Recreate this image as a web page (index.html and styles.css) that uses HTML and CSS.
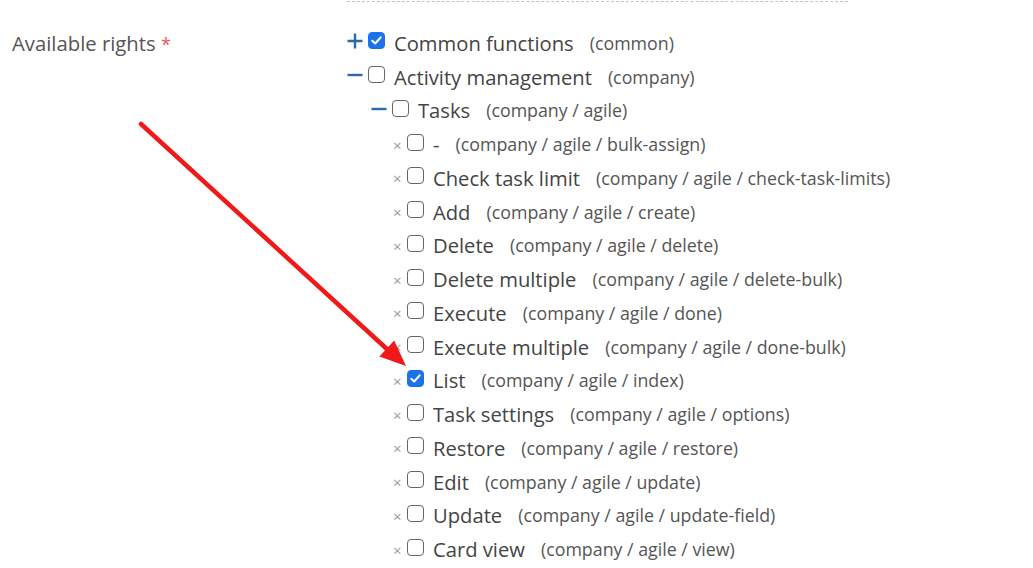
FILE: index.html
```html
<!DOCTYPE html>
<html lang="en">

<head>
    <meta charset="UTF-8">
    <meta name="viewport" content="width=device-width, initial-scale=1.0">
    <title>Available rights</title>
    <link rel="stylesheet" href="styles.css">
</head>

<body>
    <div class="separator"></div>

    <div class="form-row">
        <div class="form-label">Available rights <span class="required">*</span></div>

        <ul class="tree">
            <li class="node">
                <span class="toggle"><svg viewBox="0 0 16 16"><path d="M0.5 8 H15.5 M8 0.5 V15.5" /></svg></span>
                <span class="check checked"><svg viewBox="0 0 16 16"><path d="M3.5 8.3 L6.6 11.2 L12.5 4.6" /></svg></span>
                <span class="name">Common functions</span>
                <span class="code">(common)</span>
            </li>
            <li class="node">
                <span class="toggle"><svg viewBox="0 0 16 16"><path d="M0.5 8 H15.5" /></svg></span>
                <span class="check"></span>
                <span class="name">Activity management</span>
                <span class="code">(company)</span>
            </li>
            <li class="node level-2">
                <span class="toggle"><svg viewBox="0 0 16 16"><path d="M0.5 8 H15.5" /></svg></span>
                <span class="check"></span>
                <span class="name">Tasks</span>
                <span class="code">(company / agile)</span>
            </li>
            <li class="node level-3">
                <span class="leaf">&times;</span>
                <span class="check"></span>
                <span class="name">-</span>
                <span class="code">(company / agile / bulk-assign)</span>
            </li>
            <li class="node level-3">
                <span class="leaf">&times;</span>
                <span class="check"></span>
                <span class="name">Check task limit</span>
                <span class="code">(company / agile / check-task-limits)</span>
            </li>
            <li class="node level-3">
                <span class="leaf">&times;</span>
                <span class="check"></span>
                <span class="name">Add</span>
                <span class="code">(company / agile / create)</span>
            </li>
            <li class="node level-3">
                <span class="leaf">&times;</span>
                <span class="check"></span>
                <span class="name">Delete</span>
                <span class="code">(company / agile / delete)</span>
            </li>
            <li class="node level-3">
                <span class="leaf">&times;</span>
                <span class="check"></span>
                <span class="name">Delete multiple</span>
                <span class="code">(company / agile / delete-bulk)</span>
            </li>
            <li class="node level-3">
                <span class="leaf">&times;</span>
                <span class="check"></span>
                <span class="name">Execute</span>
                <span class="code">(company / agile / done)</span>
            </li>
            <li class="node level-3">
                <span class="leaf">&times;</span>
                <span class="check"></span>
                <span class="name">Execute multiple</span>
                <span class="code">(company / agile / done-bulk)</span>
            </li>
            <li class="node level-3">
                <span class="leaf">&times;</span>
                <span class="check checked"><svg viewBox="0 0 16 16"><path d="M3.5 8.3 L6.6 11.2 L12.5 4.6" /></svg></span>
                <span class="name">List</span>
                <span class="code">(company / agile / index)</span>
            </li>
            <li class="node level-3">
                <span class="leaf">&times;</span>
                <span class="check"></span>
                <span class="name">Task settings</span>
                <span class="code">(company / agile / options)</span>
            </li>
            <li class="node level-3">
                <span class="leaf">&times;</span>
                <span class="check"></span>
                <span class="name">Restore</span>
                <span class="code">(company / agile / restore)</span>
            </li>
            <li class="node level-3">
                <span class="leaf">&times;</span>
                <span class="check"></span>
                <span class="name">Edit</span>
                <span class="code">(company / agile / update)</span>
            </li>
            <li class="node level-3">
                <span class="leaf">&times;</span>
                <span class="check"></span>
                <span class="name">Update</span>
                <span class="code">(company / agile / update-field)</span>
            </li>
            <li class="node level-3">
                <span class="leaf">&times;</span>
                <span class="check"></span>
                <span class="name">Card view</span>
                <span class="code">(company / agile / view)</span>
            </li>
        </ul>
    </div>

    <!-- annotation arrow drawn over the page -->
    <svg class="annotation" width="1033" height="568" viewBox="0 0 1033 568">
        <line x1="141" y1="124" x2="388" y2="350" />
        <polygon points="406,366 379.4,356.6 394.2,340.4" />
    </svg>
</body>

</html>
```

FILE: styles.css
```css
body {
    font-family: 'Open Sans', sans-serif;
    background-color: #fff;
    color: #444;
    margin: 0;
    padding: 0;
    overflow: hidden;
}

.separator {
    margin-left: 347px;
    width: 501px;
    border-top: 1px dashed #c4c4c4;
    margin-top: 1px;
}

.form-row {
    display: flex;
    padding-left: 12px;
    margin-top: 24px;
}

.form-label {
    width: 335px;
    font-size: 20.3px;
    color: #555;
    line-height: 34px;
}

.required {
    color: #e8585a;
    font-size: 18px;
}

.tree {
    list-style: none;
    margin: 0;
    padding: 0;
}

.node {
    display: flex;
    align-items: center;
    height: 33.75px;
}

.level-2 {
    padding-left: 24px;
}

.level-3 {
    padding-left: 46px;
}

.toggle {
    width: 21px;
    display: flex;
    margin-top: -3px;
}

.toggle svg {
    width: 16px;
    height: 16px;
}

.toggle svg path {
    fill: none;
    stroke: #2a6aa5;
    stroke-width: 2.4;
}

.leaf {
    width: 14px;
    color: #999;
    font-size: 15px;
    line-height: 1;
    margin-top: 2px;
}

.check {
    box-sizing: border-box;
    width: 17px;
    height: 17px;
    border: 1.5px solid #666;
    border-radius: 4px;
    margin-right: 9px;
    margin-top: -4px;
    background: #fff;
    display: flex;
}

.check.checked {
    background: #1a73e8;
    border-color: #1a73e8;
}

.check svg {
    width: 100%;
    height: 100%;
}

.check svg path {
    fill: none;
    stroke: #fff;
    stroke-width: 2.2;
    stroke-linecap: round;
    stroke-linejoin: round;
}

.name {
    font-size: 20.2px;
    color: #444;
}

.code {
    font-size: 17.8px;
    color: #555;
    margin-left: 16px;
}

.annotation {
    position: absolute;
    left: 0;
    top: 0;
    pointer-events: none;
}

.annotation line {
    stroke: #f01818;
    stroke-width: 4.5;
    stroke-linecap: round;
}

.annotation polygon {
    fill: #f01818;
}
```
